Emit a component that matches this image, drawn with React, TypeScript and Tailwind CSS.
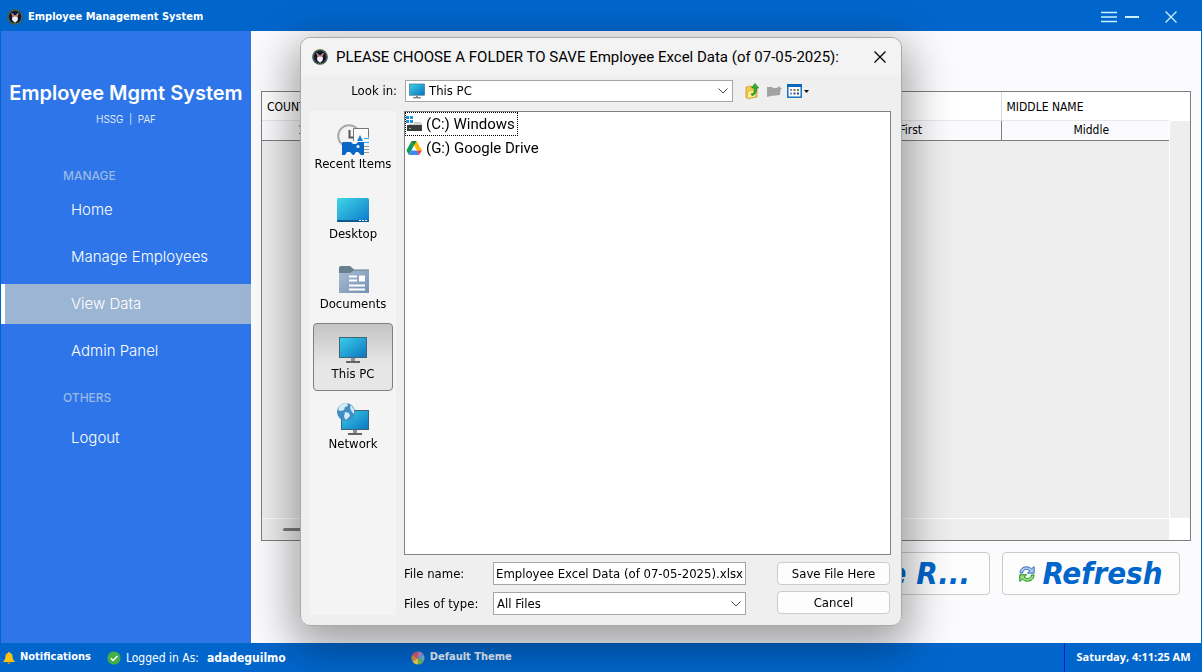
import React from "react";

const tahoma = "font-['DejaVu_Sans_Condensed','DejaVu_Sans',sans-serif]";

function Emblem({ className }: { className: string }) {
  return (
    <svg viewBox="0 0 16 16" className={className} aria-hidden="true">
      <circle cx="8" cy="8" r="7.8" fill="#2f4d2d" />
      <circle cx="8" cy="8" r="7" fill="none" stroke="#a8a67c" strokeWidth="0.7" strokeDasharray="1 1" />
      <circle cx="8" cy="8" r="6" fill="#12103f" />
      <path d="M4.6 5 L7 6.6 L8 5.8 L9 6.6 L11.6 4.6 L10.6 8 H5.4Z" fill="#c98a5a" />
      <path d="M4.5 4 L6.5 6 M11.5 4 L9.5 6" stroke="#f2e6d8" strokeWidth="0.9" />
      <path d="M5 8.4 L8 7.6 L11 8.4 L10.6 11.6 L8 13.8 L5.4 11.6Z" fill="#f4f4f8" />
    </svg>
  );
}

function ScreenIcon({ className }: { className: string }) {
  return (
    <svg viewBox="0 0 32 28" className={className} aria-hidden="true">
      <defs>
        <linearGradient id="screen" x1="0" y1="0" x2="1" y2="1">
          <stop offset="0" stopColor="#3bd0ea" />
          <stop offset="1" stopColor="#0b74c0" />
        </linearGradient>
      </defs>
      <rect x="2.5" y="1.5" width="27" height="20" fill="url(#screen)" stroke="#3e6478" />
      <rect x="14" y="22" width="4" height="3" fill="#8a9096" />
      <rect x="9" y="25" width="14" height="2" fill="#5e666c" />
    </svg>
  );
}

function RecentIcon() {
  return (
    <svg viewBox="0 0 32 32" className="h-8 w-8" aria-hidden="true">
      <circle cx="12" cy="12" r="10.8" fill="#f3f3f3" stroke="#a9a9a9" strokeWidth="2" />
      <path d="M12.500 6v7.500h4" fill="none" stroke="#555" strokeWidth="2" />
      <path d="M16.500 4.500h15v12h-4v14h-11z" fill="#fafafa" />
      <path d="M16.500 17V4.500h15v9" fill="none" stroke="#777" />
      <path d="M20 17l3-6 3 6z" fill="#1581d6" />
      <path d="M27 14.500h5M27 18.500h5" stroke="#31a6e8" />
      <path d="M27 22.500h5M27 25.500h5M27 28.500h5" stroke="#999" />
      <path d="M6 18h8l2 2h3l2-2h6v13h-3l-3-3h-2l-2 3h-1l-3-3h-3l-2 3H5V19z" fill="#0867c6" />
      <circle cx="21" cy="22.500" r="1.500" fill="#fff" />
    </svg>
  );
}

function DesktopIcon() {
  return (
    <svg viewBox="0 0 32 32" className="h-8 w-8" aria-hidden="true">
      <defs>
        <linearGradient id="desk" x1="0" y1="0" x2="1" y2="1">
          <stop offset="0" stopColor="#3fd6e6" />
          <stop offset="1" stopColor="#0d78cb" />
        </linearGradient>
      </defs>
      <rect y="4" width="32" height="24" rx="1.5" fill="url(#desk)" />
      <path d="M0 26h32v1a1 1 0 0 1-1 1H1a1 1 0 0 1-1-1z" fill="#0b5a8e" />
      <path d="M22 26.500h2m1 0h2m1 0h2" stroke="#e8f6ff" />
    </svg>
  );
}

function DocumentsIcon() {
  return (
    <svg viewBox="0 0 32 32" className="h-8 w-8" aria-hidden="true">
      <defs>
        <linearGradient id="docs" x1="0" y1="0" x2="1" y2="1">
          <stop offset="0" stopColor="#a9bdd3" />
          <stop offset="1" stopColor="#7590b4" />
        </linearGradient>
      </defs>
      <path d="M2 9V4a2 2 0 0 1 2-2h9l4 3.500h15V9z" fill="#687f8c" />
      <path d="M2 9h11l4-2.500h15V29H2z" fill="url(#docs)" />
      <path d="M12 12.500h8M12 16.500h8M12 21.500h16M12 25.500h16" stroke="#fff" strokeWidth="2" />
      <rect x="22" y="11.500" width="6" height="6" fill="#fff" />
    </svg>
  );
}

function NetworkIcon() {
  return (
    <svg viewBox="0 0 32 34" className="h-[34px] w-8" aria-hidden="true">
      <rect x="4.500" y="8.500" width="27" height="19" fill="url(#screen)" stroke="#3e6478" />
      <rect x="16" y="28" width="4" height="3" fill="#8a9096" />
      <rect x="11" y="31" width="14" height="2" fill="#5e666c" />
      <circle cx="9" cy="10" r="9" fill="#3f8fc4" />
      <path d="M2 5c2-3 5-4 8-4l1 3-3 1-1 3-3 1-3-1zM8 10l4 1 1 3-4 4-2-3zM14 3l3 4v5l-2-2-2-4z" fill="#d2ebf6" />
    </svg>
  );
}

function DriveCIcon() {
  return (
    <svg viewBox="0 0 16 16" className="h-4 w-4" aria-hidden="true">
      <path d="M0 0h3v3H0zM4 0h3v3H4zM0 4h3v3H0zM4 4h3v3H4z" fill="#1b94dd" />
      <path d="M8 6h7l1 4H2l1-2h5z" fill="#cfcfcf" />
      <rect x="1" y="9" width="15" height="6" fill="#3c3c3c" />
      <rect x="3" y="12" width="2" height="1" fill="#58d858" />
    </svg>
  );
}

function GoogleDriveIcon() {
  return (
    <svg viewBox="0 0 16 16" className="h-4 w-4" aria-hidden="true">
      <path d="M5.500 1h5L16 10.500h-5z" fill="#fbbc04" />
      <path d="M5.500 1L8 5.500 3 15 .4 10.500z" fill="#0f9d58" />
      <path d="M5.500 1h5L8 5.500z" fill="#188038" />
      <path d="M5.400 10.500H11L13 15H3z" fill="#4285f4" />
      <path d="M10.800 10.500H16L13 15z" fill="#ea4335" />
    </svg>
  );
}

function FolderUpIcon() {
  return (
    <svg viewBox="0 0 16 16" className="h-4 w-4" aria-hidden="true">
      <path d="M1 4l5-1 1 1 5 1v9l-9 1.500-2-1z" fill="#f3cc50" stroke="#c79a22" strokeWidth="0.8" />
      <path d="M3 8l9-1-1.500 7L2 15.500z" fill="#ffeb94" stroke="#d0a62e" strokeWidth="0.6" />
      <path d="M6 11c3-.5 3.500-2 3.300-6H6.500l3.500-4.500L13.500 5h-2c.3 4-1 7-4.500 7.500z" fill="#35b22c" stroke="#16801a" strokeWidth="0.7" />
    </svg>
  );
}

function NewFolderIcon() {
  return (
    <svg viewBox="0 0 16 16" className="h-4 w-4" aria-hidden="true">
      <path d="M1 4h5l1 1h4l2-2 1 1.500L16 5l-1.500 1.500L14 12l-9 1-4 1z" fill="#a3a3a3" />
    </svg>
  );
}

function ViewMenuIcon() {
  return (
    <svg viewBox="0 0 23 16" className="h-4 w-[23px]" aria-hidden="true">
      <rect x="0.800" y="1.800" width="13.400" height="12.400" fill="#fff" stroke="#0a66b8" strokeWidth="1.400" />
      <rect x="0.200" y="1" width="14.600" height="3" fill="#0a66b8" />
      <path d="M3 7h2M3 10.500h2" stroke="#7a8fb0" strokeWidth="2" />
      <path d="M6.500 7h2" stroke="#b34d4d" strokeWidth="2" />
      <path d="M6.500 10.500h2M10 10.500h2" stroke="#20508c" strokeWidth="2" />
      <path d="M10 7h2" stroke="#3c9b50" strokeWidth="2" />
      <path d="M17 7h5l-2.500 3z" fill="#111" />
    </svg>
  );
}

function RefreshIcon() {
  return (
    <svg viewBox="0 0 16 16" className="h-4 w-4 shrink-0" aria-hidden="true">
      <path d="M1 7C1 3 4 .8 7.500.8c2 0 3.700.8 5 2L15.200.6v6.600H8.500l2.300-2.400C8.500 2.600 4 3 3.600 7z" fill="#a9c8ee" stroke="#2a62ad" strokeWidth="0.900" />
      <path d="M15 9c0 4-3 6.200-6.500 6.200-2 0-3.700-.8-5-2L.8 15.400V8.800h6.700l-2.300 2.400c2.300 2.200 6.800 1.800 7.200-2.200z" fill="#9fe07c" stroke="#128a1a" strokeWidth="1" />
    </svg>
  );
}

function Chevron() {
  return (
    <svg viewBox="0 0 10 6" className="h-[6px] w-[10px] shrink-0" aria-hidden="true">
      <path d="M.5.5L5 5 9.500.5" fill="none" stroke="#4a4a4a" />
    </svg>
  );
}

function CloseGlyph({ className }: { className: string }) {
  return (
    <svg viewBox="0 0 12 12" className={className} aria-hidden="true">
      <path d="M.5.5l11 11M11.500.5l-11 11" fill="none" stroke="currentColor" strokeWidth="1.300" />
    </svg>
  );
}

function TitleBar() {
  return (
    <header className="flex h-[31px] shrink-0 items-center bg-[#0066cc] pl-[7px] pr-[25px] pt-[3px] text-white">
      <Emblem className="h-4 w-4" />
      <h1 className="ml-[5px] font-['DejaVu_Sans_Condensed','DejaVu_Sans',sans-serif] text-[11px] font-bold leading-4">
        Employee Management System
      </h1>
      <div className="ml-auto flex items-center text-[#c9f1ff]">
        <button type="button" aria-label="Menu">
          <svg viewBox="0 0 16 12" className="h-3 w-4">
            <path d="M0 1.500h16M0 6h16M0 10.500h16" stroke="currentColor" strokeWidth="1.300" />
          </svg>
        </button>
        <button type="button" aria-label="Minimize" className="ml-2">
          <svg viewBox="0 0 14 12" className="h-3 w-[14px]">
            <path d="M0 6h14" stroke="currentColor" strokeWidth="2" />
          </svg>
        </button>
        <button type="button" aria-label="Close" className="ml-[26px]">
          <CloseGlyph className="h-3 w-3" />
        </button>
      </div>
    </header>
  );
}

function NavItem({ label, active = false }: { label: string; active?: boolean }) {
  return (
    <a
      href="#"
      aria-current={active ? "page" : undefined}
      className={
        active
          ? "flex h-10 items-center border-l-4 border-white bg-[#9bb5d3] pl-[66px] text-white"
          : "flex h-10 items-center border-l-4 border-transparent pl-[66px] text-white"
      }
    >
      {label}
    </a>
  );
}

function Sidebar() {
  return (
    <aside className="w-[251px] shrink-0 border-l border-[#0066cc] bg-[#2d75e8] font-['Inter',sans-serif]">
      <div className="pt-12 text-center text-white">
        <p className="whitespace-nowrap text-[20px] font-semibold leading-7">Employee Mgmt System</p>
        <p className="mt-1 text-[10px] font-light leading-4">HSSG&nbsp; |&nbsp; PAF</p>
      </div>
      <nav className="mt-[41px] text-[15px] font-light">
        <h2 className="pl-[62px] text-[12px] font-medium leading-4 text-[#9bb9e6]">MANAGE</h2>
        <div className="mt-[6px] flex flex-col gap-[7px]">
          <NavItem label="Home" />
          <NavItem label="Manage Employees" />
          <NavItem label="View Data" active />
          <NavItem label="Admin Panel" />
        </div>
        <h2 className="mt-[19px] pl-[62px] text-[12px] font-medium leading-4 text-[#9bb9e6]">OTHERS</h2>
        <div className="mt-3">
          <NavItem label="Logout" />
        </div>
      </nav>
    </aside>
  );
}

function EmployeeTable() {
  return (
    <div className="flex flex-1 flex-col border border-[#7e7e82] bg-[#eeeeee]">
      <div className="flex flex-1">
        <div className="w-0 flex-1">
          <div className="overflow-hidden">
            <table className={`w-[919px] table-fixed border-collapse text-[12px] text-black ${tahoma}`}>
              <colgroup>
                <col className="w-[79px]" />
                <col className="w-40" />
                <col className="w-40" />
                <col className="w-40" />
                <col className="w-[180px]" />
                <col className="w-[180px]" />
              </colgroup>
              <thead>
                <tr className="h-7 bg-white text-left">
                  <th className="pl-[5px] pt-[3px] font-normal">COUNT</th>
                  <td />
                  <td />
                  <td />
                  <td />
                  <th className="border-l border-[#d9d9d9] pl-[5px] pt-[3px] font-normal">MIDDLE NAME</th>
                </tr>
              </thead>
              <tbody>
                <tr className="h-5 border-b border-t border-b-[#7e7e82] border-t-[#e8e8e8] bg-[#fbfbfd] text-center">
                  <td>1</td>
                  <td />
                  <td />
                  <td />
                  <td>First</td>
                  <td className="border-l border-[#7e7e82] border-t-[#e8e8e8]">Middle</td>
                </tr>
              </tbody>
            </table>
          </div>
        </div>
        <div className="flex w-[21px] shrink-0 flex-col">
          <div className="h-[29px] bg-white" />
          <div className="flex-1 border-l border-white" />
        </div>
      </div>
      <div className="flex h-[22px] border-t border-white">
        <div className="flex flex-1 items-center px-[21px]">
          <div className="h-[3px] w-1/2 rounded-full bg-[#7c7c7c]" />
        </div>
        <div className="w-[21px] bg-white" />
      </div>
    </div>
  );
}

function MainPanel() {
  const action =
    "flex h-[43px] items-center rounded border border-[#cccccc] bg-[#fdfdfd] text-[31px] font-bold italic leading-none text-[#0066cc]";
  return (
    <main className="flex min-w-0 flex-1 flex-col border-r border-[#0066cc] bg-[#fbfbfe] pb-12 pl-[10px] pr-[10px] pt-[60px]">
      <EmployeeTable />
      <div className={`mr-[11px] mt-[11px] flex justify-end gap-3 ${tahoma}`}>
        <button type="button" className={`${action} w-[178px] justify-end pr-[19px]`}>
          e R...
        </button>
        <button type="button" className={`${action} w-[178px] justify-center gap-[7px]`}>
          <RefreshIcon />
          Refresh
        </button>
      </div>
    </main>
  );
}

function StatusBar() {
  return (
    <footer className={`flex h-[29px] shrink-0 items-center bg-[#0066cc] pl-[3px] text-[12px] text-white ${tahoma}`}>
      <svg viewBox="0 0 12 12" className="h-3 w-3" aria-hidden="true">
        <path d="M5 1a1 1 0 0 1 2 0c2 .5 2.600 2 2.600 4 0 2 .6 3 1.900 3.800V10H.5V8.800C1.800 8 2.400 7 2.400 5c0-2 .6-3.500 2.600-4z" fill="#ffc20e" />
        <path d="M4.500 10.500h3a1.500 1.500 0 0 1-3 0z" fill="#e88b00" />
      </svg>
      <span className="ml-[5px] text-[11px] font-bold">Notifications</span>
      <svg viewBox="0 0 14 14" className="ml-4 h-[14px] w-[14px]" aria-hidden="true">
        <circle cx="7" cy="7" r="6.600" fill="#43b047" />
        <path d="M3.800 7.200l2.300 2.300 4.300-4.600" fill="none" stroke="#fff" strokeWidth="1.500" />
      </svg>
      <span className="ml-[5px]">Logged in As:</span>
      <span className="ml-2 font-bold">adadeguilmo</span>
      <div className="ml-[125px] flex items-center gap-[5px] text-[#e6f0fb]">
        <svg viewBox="0 0 14 14" className="h-[14px] w-[14px]" aria-hidden="true">
          <path d="M7 7V.5A6.500 6.500 0 0 1 12.600 3.800z" fill="#b58ad0" />
          <path d="M7 7l5.600-3.200a6.500 6.500 0 0 1 0 6.400z" fill="#6fb7d8" />
          <path d="M7 7l5.600 3.200A6.500 6.500 0 0 1 7 13.500z" fill="#74b957" />
          <path d="M7 7v6.500a6.500 6.500 0 0 1-5.600-3.300z" fill="#e8d24e" />
          <path d="M7 7l-5.600 3.200a6.500 6.500 0 0 1 0-6.400z" fill="#e88a45" />
          <path d="M7 7L1.400 3.800A6.500 6.500 0 0 1 7 .5z" fill="#d45d78" />
        </svg>
        <span className="text-[11px] font-bold">Default Theme</span>
      </div>
      <div className="ml-auto flex h-full w-[138px] items-center justify-center border-l border-[#1a1ad0] font-['Open_Sans',sans-serif] text-[11px] font-bold">
        <time>Saturday, 4:11:25 AM</time>
      </div>
    </footer>
  );
}

function Place({ icon, label, active = false }: { icon: React.ReactNode; label: string; active?: boolean }) {
  return (
    <button
      type="button"
      aria-pressed={active}
      className={
        active
          ? "flex h-[68px] w-20 flex-col items-center justify-end rounded-sm border border-[#808080] bg-linear-to-b from-[#c4c4c4] to-[#e6e6e6] to-60% pb-2"
          : "flex h-[68px] w-20 flex-col items-center justify-end border border-transparent pb-2"
      }
    >
      {icon}
      <span className="whitespace-nowrap leading-4">{label}</span>
    </button>
  );
}

function SaveDialog() {
  const push = "h-[23px] rounded border border-[#cccccc] bg-[#fdfdfd]";
  return (
    <div className="pointer-events-none fixed inset-0 flex items-start justify-center pt-[37px]">
      <div className="pointer-events-auto w-[602px] max-w-full rounded-[10px] shadow-[0_14px_44px_8px_rgba(0,0,0,0.36)]">
        <section
          role="dialog"
          aria-labelledby="dialog-title"
          className={`flex h-[589px] flex-col rounded-[10px] border border-[#a9a9a9] bg-[#efefef] text-[13px] text-black ${tahoma}`}
        >
          <div className="flex h-[38px] shrink-0 items-center rounded-t-[10px] bg-[#f3f3f3] pl-[11px] pr-[15px]">
            <Emblem className="h-4 w-4" />
            <h2 id="dialog-title" className="ml-2 whitespace-nowrap font-['Roboto',sans-serif] text-[15px] leading-5">
              PLEASE CHOOSE A FOLDER TO SAVE Employee Excel Data (of 07-05-2025):
            </h2>
            <button type="button" aria-label="Close dialog" className="ml-auto">
              <CloseGlyph className="h-3 w-3" />
            </button>
          </div>

          <div className="mt-1 flex h-[22px] shrink-0 items-center">
            <label htmlFor="look-in" className="w-24 text-right">
              Look in:
            </label>
            <div className="ml-2 flex h-[22px] w-[328px] items-center border border-[#a6a6a6] bg-white pl-[2px] pr-1">
              <ScreenIcon className="h-4 w-[18px]" />
              <select id="look-in" className="flex-1 appearance-none bg-transparent pl-[3px] outline-none">
                <option>This PC</option>
              </select>
              <Chevron />
            </div>
            <div className="ml-3 flex items-center gap-[5px]">
              <button type="button" aria-label="Up one level">
                <FolderUpIcon />
              </button>
              <button type="button" aria-label="New folder">
                <NewFolderIcon />
              </button>
              <button type="button" aria-label="View menu">
                <ViewMenuIcon />
              </button>
            </div>
          </div>

          <div className="flex flex-1 gap-2 pb-[10px] pl-[9px] pr-[10px] pt-[9px]">
            <div className="flex w-[86px] shrink-0 flex-col items-center gap-0.5 bg-[#f4f4f4] pt-[2px]">
              <Place icon={<RecentIcon />} label="Recent Items" />
              <Place icon={<DesktopIcon />} label="Desktop" />
              <Place icon={<DocumentsIcon />} label="Documents" />
              <Place icon={<ScreenIcon className="mb-[2px] h-7 w-8" />} label="This PC" active />
              <Place icon={<NetworkIcon />} label="Network" />
            </div>

            <div className="flex flex-1 flex-col">
              <ul className="flex-1 border border-[#828282] bg-white font-['Roboto',sans-serif] text-[15px]">
                <li className="flex h-6 w-[113px] items-center gap-1 whitespace-nowrap border border-dotted border-black">
                  <DriveCIcon />
                  (C:) Windows
                </li>
                <li className="flex h-6 items-center gap-1 whitespace-nowrap pl-px">
                  <GoogleDriveIcon />
                  (G:) Google Drive
                </li>
              </ul>
              <div className="mt-[7px] flex justify-between pr-px">
                <div className="grid grid-cols-[89px_253px] items-center gap-y-[7px]">
                  <label htmlFor="file-name">File name:</label>
                  <input
                    id="file-name"
                    defaultValue="Employee Excel Data (of 07-05-2025).xlsx"
                    className="h-[23px] w-full border border-[#a6a6a6] bg-white px-[2px] outline-none"
                  />
                  <label htmlFor="file-type">Files of type:</label>
                  <div className="flex h-[23px] items-center border border-[#a6a6a6] bg-white pl-[3px] pr-1">
                    <select id="file-type" className="flex-1 appearance-none bg-transparent outline-none">
                      <option>All Files</option>
                    </select>
                    <Chevron />
                  </div>
                </div>
                <div className="flex w-[113px] flex-col gap-[6px]">
                  <button type="button" className={push}>
                    Save File Here
                  </button>
                  <button type="button" className={push}>
                    Cancel
                  </button>
                </div>
              </div>
            </div>
          </div>
        </section>
      </div>
    </div>
  );
}

export default function App() {
  return (
    <div className="flex min-h-screen flex-col bg-[#fbfbfe]">
      <TitleBar />
      <div className="flex flex-1">
        <Sidebar />
        <MainPanel />
      </div>
      <StatusBar />
      <SaveDialog />
    </div>
  );
}
